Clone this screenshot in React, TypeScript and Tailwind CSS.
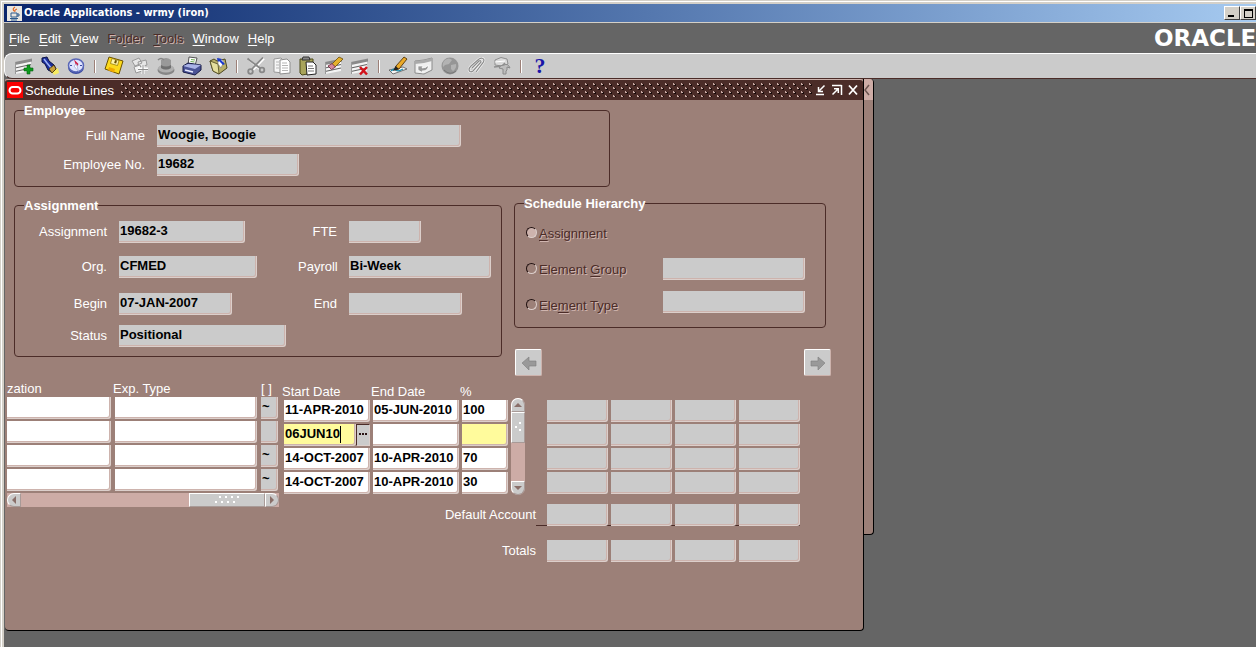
import React from "react";

type FieldProps = {
  id?: string;
  label?: string;
  value?: string;
  tone?: "grey" | "white" | "yellow";
  className?: string;
};

const tones = {
  grey: "bg-[#cbcbcb] read-only:cursor-default",
  white: "bg-white",
  yellow: "bg-[#fffb9c]",
};

function Field({ id, label, value = "", tone = "grey", className = "" }: FieldProps) {
  return (
    <input
      id={id}
      aria-label={label}
      defaultValue={value}
      readOnly={tone === "grey"}
      className={`block h-[22px] min-w-0 rounded-br-[3px] border-r border-b border-[#dccfcb] px-[1px] pb-[2px] text-[13px] font-bold text-black shadow-[inset_-1px_-1px_0_#cdb3ad] outline-none ${tones[tone]} ${className}`}
    />
  );
}

function Label({ htmlFor, children }: { htmlFor: string; children: React.ReactNode }) {
  return (
    <label htmlFor={htmlFor} className="h-[22px] text-right leading-[22px] whitespace-nowrap">
      {children}
    </label>
  );
}

function Group({ title, className = "", children }: { title: string; className?: string; children: React.ReactNode }) {
  return (
    <fieldset className={`rounded-[4px] border border-[#4b2c28] ${className}`}>
      <legend className="ml-[9px] text-[13px] leading-[13px] font-bold">{title}</legend>
      {children}
    </fieldset>
  );
}

/* ---------- toolbar drawings, all on a 20 x 20 grid ---------- */

const Sheet = () => (
  <>
    <path d="M1 7 L17 3 V15 L1 18Z" fill="#f4f4f4" />
    <path d="M1 6 L18 2.500 V5.500 L1 9Z" fill="#8a8a8a" />
    <path d="M1 12 L17 8.500 M1 15.500 L17 12" stroke="#666" strokeWidth="1.200" fill="none" />
    <path d="M1.500 6 V18" stroke="#999" />
  </>
);

const icons: Record<string, React.ReactNode> = {
  New: (
    <>
      <Sheet />
      <path d="M13 9h3v3h3v3h-3v3h-3v-3h-3v-3h3z" fill="#0c9a1c" stroke="#056010" strokeWidth=".6" />
    </>
  ),
  Find: (
    <>
      <path d="M11 15l7-3 1 5-5 2z" fill="#f7ec62" />
      <path d="M2 2l5-1 2 4 5 4 2 4-4 3-4-2-3-6-3-2z" fill="#1c2f9c" stroke="#0b1245" />
      <path d="M4 3l3 4 5 6" stroke="#9fb4f5" strokeWidth="1.500" fill="none" />
      <path d="M9 13l5-4 2 4-4 4z" fill="#c9a23a" stroke="#40300a" strokeWidth=".8" />
    </>
  ),
  Navigator: (
    <>
      <ellipse cx="10" cy="11" rx="8" ry="7" fill="#3a4aa0" />
      <ellipse cx="10" cy="9.500" rx="7.500" ry="6.500" fill="#dfe4ff" stroke="#5a68b8" strokeWidth="1.500" />
      <path d="M8 3.500l4.500 4.500-2 3z" fill="#d01840" />
      <path d="M12.500 15.500L8 10l2.500-2z" fill="#fff" stroke="#8a97cf" strokeWidth=".6" />
      <path d="M4 9.500h2M14 9.500h2" stroke="#3a4aa0" />
    </>
  ),
  Save: (
    <>
      <path d="M5 1l14 4-4 13-14-5z" fill="#fbd91c" stroke="#6b5200" />
      <path d="M8 2.500l7 2-1.500 5-7-2z" fill="#fff6a8" stroke="#8a6d00" strokeWidth=".7" />
      <path d="M11 4l2 .6-.8 3-2-.6z" fill="#6b5200" />
      <path d="M5 11l6 2-1 3.500-6-2.300z" fill="#f0a800" />
    </>
  ),
  "Next Step": (
    <>
      <path d="M2 5l7-3 3 5-7 3zM8 6l8-2 1 5-8 2z" fill="#e6e6e6" stroke="#999" />
      <path d="M4 11l6-2 2 6-6 2z" fill="#f2f2f2" stroke="#999" />
      <path d="M13 9v9M8 13h10" stroke="#fff" strokeWidth="3" />
      <path d="M13 9v9M8 13.500h10" stroke="#8c8c8c" />
    </>
  ),
  "Switch Responsibility": (
    <>
      <ellipse cx="10" cy="14" rx="8.500" ry="5" fill="#868686" />
      <ellipse cx="10" cy="12.500" rx="8" ry="4" fill="#b0b0b0" />
      <path d="M5 4q5-4 10 0l0 8q-5 3-10 0z" fill="#999" />
      <path d="M5 9q5 3 10 0v3q-5 3-10 0z" fill="#6f6f6f" />
      <path d="M2 4q3-3 6 0" stroke="#888" fill="none" strokeWidth="1.500" />
    </>
  ),
  Print: (
    <>
      <path d="M7 1l8 1-2 8-7-1z" fill="#fff" stroke="#555" />
      <path d="M9 3.500l4 .5M8.500 5.500l4 .5" stroke="#6aa84f" />
      <path d="M1 10l5-3 13 2v5l-6 5-12-3z" fill="#4a5396" stroke="#161a45" />
      <path d="M1 10l5-2 13 1-6 4z" fill="#aab3e6" />
      <path d="M3 14l8 2" stroke="#e8ebff" strokeWidth="1.500" />
    </>
  ),
  "Close Form": (
    <>
      <path d="M2 5l4-2 3 2 8-2 2 9-8 6-6-3z" fill="#b9b06a" stroke="#4c4720" />
      <path d="M2 5l8 3 1 10-6-3z" fill="#e5df9e" stroke="#4c4720" strokeWidth=".8" />
      <path d="M10 2l6 3-3 7-3-4z" fill="#fff" stroke="#777" strokeWidth=".6" />
      <path d="M9 2l5 1-1 1 4 4-2 1-4-4-1 1z" fill="#1c3bd0" />
    </>
  ),
  Cut: (
    <>
      <path d="M3 3.500l11 10M18 2.500L7 14" stroke="#fff" strokeWidth="2" />
      <path d="M1.500 2.500l13 10M17 1.500L6 13" stroke="#888" strokeWidth="1.800" />
      <circle cx="4.500" cy="15.500" r="2.300" fill="none" stroke="#888" strokeWidth="1.800" />
      <circle cx="16" cy="14" r="2.300" fill="none" stroke="#888" strokeWidth="1.800" />
    </>
  ),
  Copy: (
    <>
      <path d="M2 3l7-1 2 2v13l-9-1z" fill="#f6f6f6" stroke="#999" />
      <path d="M8 4l7-1 3 3v11l-10 1z" fill="#fff" stroke="#8f8f8f" />
      <path d="M10 7h5M10 9.500h6M10 12h6M10 14.500h6M4 6h3M4 9h3M4 12h3" stroke="#b5b5b5" />
    </>
  ),
  Paste: (
    <>
      <path d="M2 3h13v14l-11 2-2-2z" fill="#a8a45a" stroke="#4a4818" />
      <path d="M5 1h6l1 3H4z" fill="#888" stroke="#333" />
      <path d="M8 6h7l3 3v9l-9 1z" fill="#fff" stroke="#222" />
      <path d="M10 10h5M10 12.500h6M10 15h6" stroke="#777" />
    </>
  ),
  "Clear Record": (
    <>
      <Sheet />
      <path d="M8 8l7-7 4 2-8 8z" fill="#e5b12c" stroke="#6a4c08" strokeWidth=".8" />
      <path d="M4 10l4-2.500 3.500 3.500-4 2.500z" fill="#d5899d" stroke="#6a2138" strokeWidth=".8" />
    </>
  ),
  Delete: (
    <>
      <Sheet />
      <path d="M10 11l7 7.500M17 11l-7 7.500" stroke="#d3121a" strokeWidth="2.500" />
    </>
  ),
  "Edit Field": (
    <>
      <path d="M1 14l14-3 4 2-14 5z" fill="#f6f6f6" stroke="#555" strokeWidth=".8" />
      <path d="M3 15q3-3 5-1t7-1" stroke="#1f8fb0" fill="none" strokeWidth="1.300" />
      <path d="M8 10L16 1l3 2L11 13l-4 1z" fill="#eaa928" stroke="#50340a" strokeWidth=".9" />
      <path d="M5 15l2.500-5 3.500 3z" fill="#222" />
    </>
  ),
  Zoom: (
    <>
      <path d="M1 5l9-1 8-2v12l-8 4-9-1z" fill="#efefef" stroke="#8b8b8b" />
      <path d="M1 5l9-1 8-2v3l-8 2-9 1z" fill="#aaa" />
      <path d="M4 10h5l-1 2q5 0 6-3 1 6-6 6l1 2-5-3z" fill="#999" stroke="#fff" strokeWidth=".7" />
    </>
  ),
  Translations: (
    <>
      <circle cx="10" cy="10" r="8.500" fill="#969696" />
      <path d="M5 4q4-3 7 0l-3 4-4 1-2 2q-1-4 2-7zM11 9l5-1q1 4-3 7l-2-2z" fill="#b3b3b3" />
      <path d="M4 14q6 6 12 1" stroke="#777" fill="none" />
    </>
  ),
  Attachments: (
    <>
      <path d="M6 12l7-7q2-1 2 1l-8 9q-3 2-4-1 0-2 2-4l8-7q4-2 5 1 0 2-2 4l-6 8" fill="none" stroke="#f4f4f4" strokeWidth="2.500" />
      <path d="M6 12l7-7q2-1 2 1l-8 9q-3 2-4-1 0-2 2-4l8-7q4-2 5 1 0 2-2 4l-6 8" fill="none" stroke="#8c8c8c" strokeWidth="1.200" />
    </>
  ),
  "Folder Tools": (
    <>
      <path d="M3 4l6-2.500 6 1.500 1 5-6 2-7-1z" fill="#d9d9d9" stroke="#8f8f8f" />
      <path d="M2 11l8-1 3-3" stroke="#8f8f8f" fill="none" strokeWidth="1.500" />
      <path d="M12 9q4-2 6 3l-3-1v3l-1 1v3h-3v-5l-4-1q1-3 5-3z" fill="#bdbdbd" stroke="#8a8a8a" />
      <path d="M3 6l10-1" stroke="#fff" />
    </>
  ),
};

const toolbarGroups: string[][] = [
  ["New", "Find", "Navigator"],
  ["Save", "Next Step", "Switch Responsibility", "Print", "Close Form"],
  ["Cut", "Copy", "Paste", "Clear Record", "Delete"],
  ["Edit Field", "Zoom", "Translations", "Attachments", "Folder Tools"],
];

const menus: { before: string; key: string; after: string; off?: boolean }[] = [
  { before: "", key: "F", after: "ile" },
  { before: "", key: "E", after: "dit" },
  { before: "", key: "V", after: "iew" },
  { before: "Fo", key: "l", after: "der", off: true },
  { before: "", key: "T", after: "ools", off: true },
  { before: "", key: "W", after: "indow" },
  { before: "", key: "H", after: "elp" },
];

const embossed = "text-[#4b2c28] [text-shadow:1px_1px_0_#d0b5af]";

function TitleBar() {
  return (
    <header className="flex h-[19px] items-center justify-between border-b border-[#d4d0c8] bg-gradient-to-r from-[#0a246a] to-[#a6caf0] pl-[3px]">
      <div className="flex items-center gap-[2px]">
        <svg width="15" height="15" viewBox="0 0 15 15" aria-hidden="true">
          <rect width="15" height="15" fill="#e9e6e0" />
          <path d="M8 1q-3 2-1 4M10 3q-3 1-2 3" stroke="#e2641e" strokeWidth="1.200" fill="none" />
          <path d="M4 7h6v4H4zM10 8h2v2h-2" fill="none" stroke="#2c5a8c" />
          <path d="M3 12.500h8M4 14h6" stroke="#2c5a8c" />
        </svg>
        <h1 className="font-['DejaVu_Sans_Condensed','DejaVu_Sans',sans-serif] text-[11px] leading-[18px] font-bold text-white">
          Oracle Applications - wrmy (iron)
        </h1>
      </div>
      <div className="flex">
        <button aria-label="Minimize" className="flex h-[14px] w-[16px] items-end border border-t-white border-r-[#404040] border-b-[#404040] border-l-white bg-[#d4d0c8] pb-[2px] pl-[3px]">
          <span className="h-[2px] w-[6px] bg-black" />
        </button>
        <button aria-label="Maximize" className="flex h-[14px] w-[16px] items-center justify-center border border-t-white border-r-[#404040] border-b-[#404040] border-l-white bg-[#d4d0c8]">
          <span className="h-[9px] w-[9px] border border-t-2 border-black" />
        </button>
      </div>
    </header>
  );
}

function MenuBar() {
  return (
    <div className="flex h-[30px] items-center justify-between overflow-hidden">
      <nav className="flex gap-[9px] pt-[2px] pl-[5px] text-[13px] leading-[16px]">
        {menus.map((m) => (
          <button key={m.before + m.key} disabled={m.off} className={m.off ? embossed : "text-white"}>
            {m.before}
            <span className="underline underline-offset-2">{m.key}</span>
            {m.after}
          </button>
        ))}
      </nav>
      <span className="w-[102px] overflow-hidden font-['DejaVu_Sans',sans-serif] text-[23px] leading-[28px] font-bold text-white">ORACLE</span>
    </div>
  );
}

function ToolBar() {
  return (
    <div className="flex h-[26px] items-center gap-[6px] rounded-l-[8px] border-t border-b border-t-white border-b-[#4b2c28] border-l border-l-white bg-[#cbcbcb] pl-[9px]">
      {toolbarGroups.map((group, i) => (
        <React.Fragment key={i}>
          {group.map((name) => (
            <button key={name} aria-label={name} className="size-[20px]">
              <svg width="20" height="20" viewBox="0 0 20 20" aria-hidden="true">
                {icons[name]}
              </svg>
            </button>
          ))}
          <span className="flex w-[6px] justify-center">
            <span className="h-[13px] w-[2px] border-l border-[#9c8078] bg-white" />
          </span>
        </React.Fragment>
      ))}
      <button aria-label="Help" className="size-[20px] font-['Liberation_Serif',serif] text-[22px] leading-[20px] font-bold text-[#1a16a8]">
        ?
      </button>
    </div>
  );
}

function WindowTitle() {
  return (
    <div className="flex h-[21px] items-center rounded-t-[3px] border-t border-t-[#cdb3ad] bg-[#4b2c28] pr-[4px]">
      <svg width="16" height="16" viewBox="0 0 16 16" className="ml-[2px]" aria-hidden="true">
        <rect width="16" height="16" fill="#f80000" />
        <rect x="2.500" y="5" width="11" height="6.500" rx="3.250" fill="none" stroke="#fff" strokeWidth="2" />
      </svg>
      <h2 className="ml-[2px] text-[13px] leading-[19px] text-white">Schedule Lines</h2>
      <svg height="14" className="mr-[2px] ml-[6px] flex-1" aria-hidden="true">
        <defs>
          <pattern id="grip" width="8" height="8" patternUnits="userSpaceOnUse">
            <path d="M1 0h1v1h1v1h-2zM5 4h1v1h1v1h-2z" fill="#c9aca6" />
            <path d="M3 1h1v2h-2v-1h1zM7 5h1v2h-2v-1h1z" fill="#1a0b0a" />
          </pattern>
        </defs>
        <rect width="100%" height="14" fill="url(#grip)" />
      </svg>
      <div className="flex gap-[4px]">
        <button aria-label="Minimize window">
          <svg width="12" height="12" viewBox="0 0 12 12" fill="none" stroke="#fff" strokeWidth="1.500">
            <path d="M1 10.500h8M9.500 1.500L4 7M3.500 3v4.500h4.500" />
          </svg>
        </button>
        <button aria-label="Restore window">
          <svg width="12" height="12" viewBox="0 0 12 12" fill="none" stroke="#fff" strokeWidth="1.500">
            <path d="M1 1.500h9.500M10.500 1v10M1.500 10.500L6.500 5.500M3 4.700h4.300v4.300" />
          </svg>
        </button>
        <button aria-label="Close window">
          <svg width="12" height="12" viewBox="0 0 12 12" fill="none" stroke="#fff" strokeWidth="1.800">
            <path d="M2 1.500l8 9M10 1.500l-8 9" />
          </svg>
        </button>
      </div>
    </div>
  );
}

function Employee() {
  return (
    <Group title="Employee" className="w-[596px]">
      <div className="grid grid-cols-[130px_1fr] gap-x-[12px] gap-y-[7px] pt-[8px] pb-[10px]">
        <Label htmlFor="full-name">Full Name</Label>
        <Field id="full-name" value="Woogie, Boogie" className="w-[304px]" />
        <Label htmlFor="employee-no">Employee No.</Label>
        <Field id="employee-no" value="19682" className="w-[142px]" />
      </div>
    </Group>
  );
}

function Assignment() {
  return (
    <Group title="Assignment" className="mt-[2px] w-[488px]">
      <div className="grid grid-cols-[92px_167px_39px_142px] grid-rows-[35px_37px_32px_22px] gap-x-[12px] pt-[9px] pb-[9px]">
        <Label htmlFor="assignment">Assignment</Label>
        <Field id="assignment" value="19682-3" className="w-[126px]" />
        <Label htmlFor="fte">FTE</Label>
        <Field id="fte" className="w-[72px]" />
        <Label htmlFor="org">Org.</Label>
        <Field id="org" value="CFMED" className="w-[138px]" />
        <Label htmlFor="payroll">Payroll</Label>
        <Field id="payroll" value="Bi-Week" className="w-[142px]" />
        <Label htmlFor="begin">Begin</Label>
        <Field id="begin" value="07-JAN-2007" className="w-[113px]" />
        <Label htmlFor="end">End</Label>
        <Field id="end" className="w-[113px]" />
        <Label htmlFor="status">Status</Label>
        <Field id="status" value="Positional" className="w-[167px]" />
      </div>
    </Group>
  );
}

const levels = [
  { before: "", key: "A", after: "ssignment", fill: "bg-[#cdb3ad]" },
  { before: "Element ", key: "G", after: "roup", fill: "bg-transparent" },
  { before: "Ele", key: "m", after: "ent Type", fill: "bg-transparent" },
];

function Hierarchy() {
  return (
    <div className="w-[317px]">
      <Group title="Schedule Hierarchy" className="w-[312px]">
        <div className="flex justify-between pt-[12px] pr-[20px] pb-[11px] pl-[11px]">
          <div className="flex flex-col gap-[14px]">
            {levels.map((l) => (
              <label key={l.key} className={`flex h-[22px] items-center gap-[2px] ${embossed}`}>
                <input
                  type="radio"
                  name="level"
                  disabled
                  className={`mb-[2px] size-[11px] appearance-none rounded-full border border-t-[#201010] border-r-[#dccfcb] border-b-[#dccfcb] border-l-[#201010] ${l.fill}`}
                />
                <span className="pt-[2px]">
                  {l.before}
                  <span className="underline underline-offset-2">{l.key}</span>
                  {l.after}
                </span>
              </label>
            ))}
          </div>
          <div className="flex flex-col gap-[11px] pt-[36px]">
            <Field label="Element Group" className="w-[142px]" />
            <Field label="Element Type" className="w-[142px]" />
          </div>
        </div>
      </Group>
      <div className="mt-[21px] flex justify-between pl-[1px]">
        <ArrowButton label="Previous" d="M2 8l7-6v4h7v5H9v4z" />
        <ArrowButton label="Next" d="M16 8L9 2v4H2v5h7v4z" />
      </div>
    </div>
  );
}

function ArrowButton({ label, d }: { label: string; d: string }) {
  return (
    <button
      aria-label={label}
      className="flex size-[27px] items-center justify-center rounded-[2px] border border-t-white border-r-[#cdb3ad] border-b-[#cdb3ad] border-l-white bg-[#cbcbcb]"
    >
      <svg width="18" height="16" viewBox="0 0 18 16" aria-hidden="true">
        <path d={d} fill="#999" stroke="#7d7d7d" strokeWidth=".6" />
      </svg>
    </button>
  );
}

function ScrollArrow({ label, d, className }: { label: string; d: string; className: string }) {
  return (
    <button aria-label={label} className={`flex size-[14px] shrink-0 items-center justify-center border border-t-white border-r-[#a89a97] border-b-[#a89a97] border-l-white bg-[#cbcbcb] ${className}`}>
      <svg width="8" height="8" viewBox="0 0 8 8" aria-hidden="true">
        <path d={d} fill="#8a6f69" />
      </svg>
    </button>
  );
}

const th = "h-[17px] p-0 text-left font-normal whitespace-nowrap";
const flags = ["~", "", "~", "~"];

function ExpenditureLines() {
  return (
    <div className="w-[272px]">
      <table className="table-fixed border-collapse">
        <thead>
          <tr className="leading-[15px]">
            <th className={`${th} w-[106px]`}>zation</th>
            <th className={`${th} w-[148px]`}>Exp. Type</th>
            <th className={`${th} w-[17px] text-center`}>[ ]</th>
          </tr>
        </thead>
        <tbody>
          {flags.map((flag, i) => (
            <tr key={i}>
              <td className="p-0 pb-[2px]">
                <Field label={`Organization ${i + 1}`} tone="white" className="w-[104px]" />
              </td>
              <td className="p-0 pb-[2px] pl-[2px]">
                <Field label={`Expenditure type ${i + 1}`} tone="white" className="w-[142px]" />
              </td>
              <td className="p-0 pb-[2px]">
                <Field label={`Flexfield ${i + 1}`} value={flag} className="w-[17px]" />
              </td>
            </tr>
          ))}
        </tbody>
      </table>
      <div className="flex h-[14px] bg-[#cdaca6]">
        <ScrollArrow label="Scroll left" d="M6 0v8L2 4z" className="rounded-l-[7px]" />
        <div className="flex-1" />
        <div className="flex w-[76px] items-center justify-center border border-t-white border-r-[#a89a97] border-b-[#a89a97] border-l-white bg-[#cbcbcb]">
          <svg width="28" height="8" viewBox="0 0 28 8" aria-hidden="true" fill="#fff">
            <path d="M6 0h2v2H6zM12 0h2v2h-2zM18 0h2v2h-2zM24 0h2v2h-2zM2 5h2v2H2zM8 5h2v2H8zM14 5h2v2h-2zM20 5h2v2h-2z" />
          </svg>
        </div>
        <ScrollArrow label="Scroll right" d="M2 0v8l4-4z" className="rounded-r-[7px]" />
      </div>
    </div>
  );
}

const lines = [
  { start: "11-APR-2010", end: "05-JUN-2010", pct: "100" },
  { start: "06JUN10", end: "", pct: "", editing: true },
  { start: "14-OCT-2007", end: "10-APR-2010", pct: "70" },
  { start: "14-OCT-2007", end: "10-APR-2010", pct: "30" },
];

function DateLines() {
  return (
    <table className="table-fixed border-collapse">
      <thead>
        <tr className="leading-[15px]">
          <th className={`${th} w-[89px]`}>Start Date</th>
          <th className={`${th} w-[89px]`}>End Date</th>
          <th className={`${th} w-[51px]`}>%</th>
        </tr>
      </thead>
      <tbody>
        {lines.map((l, i) => (
          <tr key={i}>
            <td className="p-0 pb-[2px] pl-[2px]">
              {l.editing ? (
                <div className="relative flex w-[86px]">
                  <Field label="Start date 2" value={l.start} tone="yellow" className="flex-1" />
                  <span className="absolute top-[2px] left-[56px] h-[17px] w-px bg-black" />
                  <button
                    aria-label="List of values"
                    className="flex h-[22px] w-[14px] items-center justify-center gap-[1px] border border-t-[#4b2c28] border-r-[#dccfcb] border-b-[#dccfcb] border-l-[#4b2c28] bg-[#cbcbcb] pb-[2px]"
                  >
                    <span className="size-[2px] bg-[#2a1414]" />
                    <span className="size-[2px] bg-[#2a1414]" />
                    <span className="size-[2px] bg-[#2a1414]" />
                  </button>
                </div>
              ) : (
                <Field label={`Start date ${i + 1}`} value={l.start} tone="white" className="w-[86px]" />
              )}
            </td>
            <td className="p-0 pb-[2px] pl-[2px]">
              <Field label={`End date ${i + 1}`} value={l.end} tone="white" className="w-[86px]" />
            </td>
            <td className="p-0 pb-[2px] pl-[2px]">
              <Field label={`Percent ${i + 1}`} value={l.pct} tone={l.editing ? "yellow" : "white"} className="w-[46px]" />
            </td>
          </tr>
        ))}
      </tbody>
    </table>
  );
}

function VerticalScroll() {
  return (
    <div className="mt-[15px] flex h-[97px] w-[14px] flex-col rounded-[7px] bg-[#cdaca6]">
      <ScrollArrow label="Scroll up" d="M0 6h8L4 2z" className="rounded-t-[7px]" />
      <div className="flex h-[31px] items-center justify-center border border-t-white border-r-[#a89a97] border-b-[#a89a97] border-l-white bg-[#cbcbcb]">
        <svg width="8" height="12" viewBox="0 0 8 12" aria-hidden="true" fill="#fff">
          <path d="M5 0h2v2H5zM1 4h2v2H1zM5 7h2v2H5z" />
        </svg>
      </div>
      <div className="flex-1" />
      <ScrollArrow label="Scroll down" d="M0 2h8L4 6z" className="rounded-b-[7px]" />
    </div>
  );
}

function Accounts({ name }: { name: string }) {
  return (
    <div className="flex gap-[3px]">
      {[1, 2, 3, 4].map((n) => (
        <Field key={n} label={`${name} ${n}`} className="w-[61px]" />
      ))}
    </div>
  );
}

function Lines() {
  return (
    <div className="flex items-start gap-[3px] pt-[4px] pl-[2px]">
      <ExpenditureLines />
      <div className="mt-[3px] flex flex-col items-end">
        <div className="flex items-start">
          <DateLines />
          <VerticalScroll />
          <div className="mt-[17px] ml-[22px] flex flex-col gap-[2px]">
            {[1, 2, 3, 4].map((n) => (
              <Accounts key={n} name={`Account line ${n}, period`} />
            ))}
          </div>
        </div>
        <div className="mt-[8px] flex">
          <span className="leading-[22px]">Default Account</span>
          <div className="bg-[linear-gradient(#4b2c28,#4b2c28)] bg-[length:100%_1px] bg-bottom bg-no-repeat pl-[11px]">
            <Accounts name="Default account, period" />
          </div>
        </div>
        <div className="mt-[14px] flex gap-[11px]">
          <span className="leading-[22px]">Totals</span>
          <Accounts name="Total, period" />
        </div>
      </div>
    </div>
  );
}

export default function App() {
  return (
    <div className="flex min-h-screen flex-col bg-[#d4d0c8] pt-[1px] pl-[1px] font-['Liberation_Sans',Arial,sans-serif] text-[13px] text-white">
      <div className="flex flex-1 flex-col border-t border-l border-white bg-[#d4d0c8] pt-[2px] pl-[2px]">
        <div className="flex flex-1 flex-col bg-[#656565]">
          <TitleBar />
          <MenuBar />
          <ToolBar />
          <main className="flex items-start pl-[1px]">
            <section className="rounded-b-[4px] border-r border-b border-black bg-[#9c8078]">
              <WindowTitle />
              <div className="pt-[4px] pr-[32px] pb-[68px]">
                <div className="pl-[9px]">
                  <Employee />
                  <div className="mt-[10px] flex items-start gap-[12px]">
                    <Assignment />
                    <Hierarchy />
                  </div>
                </div>
                <Lines />
              </div>
            </section>
            <section aria-label="Background window" className="h-[456px] w-[10px] overflow-hidden rounded-tr-[4px] rounded-br-[4px] border-r border-b border-black bg-[#9c8078]">
              <div className="flex h-[21px] items-center bg-[#cdaca6]">
                <svg width="6" height="12" viewBox="0 0 6 12" fill="none" stroke="#6b5450" strokeWidth="1.500" aria-hidden="true">
                  <path d="M5 1L1 6l4 5" />
                </svg>
              </div>
            </section>
          </main>
        </div>
      </div>
    </div>
  );
}
